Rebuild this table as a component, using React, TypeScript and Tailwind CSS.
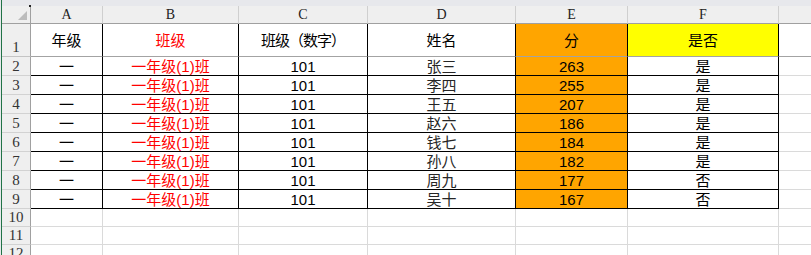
const COLS = [
  { key: "A", w: "w-[72px]" },
  { key: "B", w: "w-[136px]" },
  { key: "C", w: "w-[129px]" },
  { key: "D", w: "w-[148px]" },
  { key: "E", w: "w-[112px]" },
  { key: "F", w: "w-[151px]" },
];

const ROWS = [
  ["一", "一年级(1)班", "101", "张三", "263", "是"],
  ["一", "一年级(1)班", "101", "李四", "255", "是"],
  ["一", "一年级(1)班", "101", "王五", "207", "是"],
  ["一", "一年级(1)班", "101", "赵六", "186", "是"],
  ["一", "一年级(1)班", "101", "钱七", "184", "是"],
  ["一", "一年级(1)班", "101", "孙八", "182", "是"],
  ["一", "一年级(1)班", "101", "周九", "177", "否"],
  ["一", "一年级(1)班", "101", "吴十", "167", "否"],
];

const cellFont = { fontFamily: '"Liberation Sans", "Noto Sans CJK SC", sans-serif' };
const headFont = { fontFamily: '"Liberation Serif", "DejaVu Serif", serif' };

function RowNum({ n, h, border = "border-[#d2d2d2]" }: { n: number | string; h: string; border?: string }) {
  return (
    <div
      className={`w-[29px] ${h} shrink-0 bg-[#efefef] border-r border-r-[#a0a0a0] border-b ${border} flex items-end justify-center pb-[1px] text-[15px] leading-none text-[#333]`}
      style={headFont}
    >
      {n}
    </div>
  );
}

export default function App() {
  return (
    <div className="w-[811px] h-[255px] overflow-hidden bg-white flex">
      <div className="w-px h-full bg-[#e7e8ec]" />
      <div className="w-px h-full bg-[#217346]" />
      <div className="flex-1 flex flex-col">
        {/* top strip */}
        <div className="h-[6px] shrink-0 bg-[#e7e8ec]" />

        {/* column letters */}
        <div className="flex h-[18px] shrink-0">
          <div className="relative w-[29px] shrink-0 bg-[#efefef] border-r border-b border-[#a0a0a0]">
            <div className="absolute right-[3px] bottom-[3px] w-0 h-0 border-l-[9px] border-l-transparent border-b-[9px] border-b-[#bcbcbc]" />
            <div className="absolute -right-px -top-px w-[2px] h-[2px] bg-[#222]" />
          </div>
          {COLS.map((c) => (
            <div
              key={c.key}
              className={`${c.w} shrink-0 bg-[#efefef] border-r border-r-[#cfcfcf] border-b border-b-[#a0a0a0] flex items-center justify-center text-[14px] leading-none text-[#222]`}
              style={headFont}
            >
              {c.key}
            </div>
          ))}
          <div className="flex-1 bg-[#efefef] border-b border-b-[#a0a0a0]" />
        </div>

        {/* row 1 */}
        <div className="flex h-[33px] shrink-0" style={cellFont}>
          <RowNum n={1} h="h-[33px]" border="border-b-[#c4c4c4]" />
          <div className="w-[72px] shrink-0 border-r border-r-black border-b border-b-[#a3a3a3] flex items-center justify-center text-[15px] leading-none text-black">年级</div>
          <div className="w-[136px] shrink-0 border-r border-r-black border-b border-b-[#a3a3a3] flex items-center justify-center text-[15px] leading-none text-[#ff0000]">班级</div>
          <div className="w-[129px] shrink-0 border-r border-r-black border-b border-b-[#a3a3a3] flex items-center justify-center text-[15px] leading-none text-black tracking-[-1px]">班级（数字）</div>
          <div className="w-[148px] shrink-0 border-r border-r-black border-b border-b-[#a3a3a3] flex items-center justify-center text-[15px] leading-none text-black">姓名</div>
          <div className="w-[112px] shrink-0 bg-[#ffa500] border-r border-r-black border-b border-b-[#a3a3a3] flex items-center justify-center text-[15px] leading-none text-black">分</div>
          <div className="w-[151px] shrink-0 bg-[#ffff00] border-r border-r-black border-b border-b-[#a3a3a3] flex items-center justify-center text-[15px] leading-none text-black">是否</div>
          <div className="flex-1 border-b border-b-[#a3a3a3]" />
        </div>

        {/* rows 2-9 */}
        {ROWS.map((r, i) => (
          <div key={i} className="flex h-[19px] shrink-0" style={cellFont}>
            <RowNum n={i + 2} h="h-[19px]" />
            {COLS.map((c, j) => (
              <div
                key={c.key}
                className={`${c.w} shrink-0 border-r border-b border-black flex items-center justify-center text-[15px] leading-none ${
                  j === 1 ? "text-[#ff0000]" : j === 3 ? "text-[#262626]" : "text-black"
                } ${j === 4 ? "bg-[#ffa500]" : ""}`}
              >
                {r[j]}
              </div>
            ))}
            <div className="flex-1 border-b border-b-[#dadada]" />
          </div>
        ))}

        {/* empty rows 10-12 */}
        {[10, 11, 12].map((n) => (
          <div key={n} className="flex h-[18px] shrink-0">
            <RowNum n={n} h="h-[18px]" />
            {COLS.map((c) => (
              <div key={c.key} className={`${c.w} shrink-0 border-r border-b border-[#dadada]`} />
            ))}
            <div className="flex-1 border-b border-b-[#dadada]" />
          </div>
        ))}
      </div>
    </div>
  );
}
